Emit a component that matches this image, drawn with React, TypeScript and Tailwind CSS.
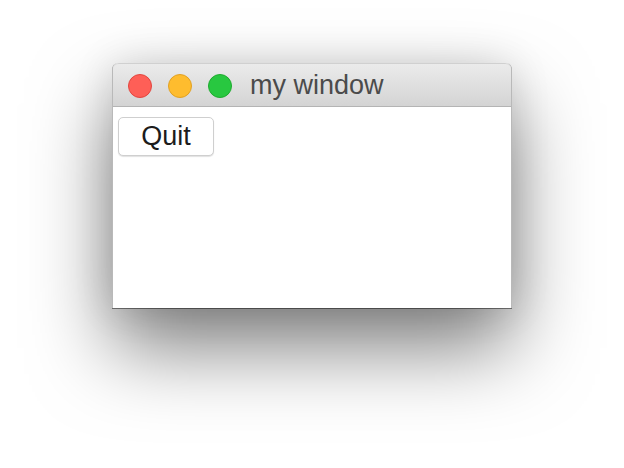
export default function App() {
  return (
    <div className="w-[624px] h-[468px] bg-white pt-[63px] pl-[112px] overflow-hidden" style={{ fontFamily: '"Liberation Sans", Arial, sans-serif' }}>
      {/* window */}
      <div className="w-[400px] h-[245px] flex flex-col rounded-t-[6px] bg-white border-x border-[#b9b9b9] shadow-[0_40px_80px_rgba(0,0,0,0.5),0_0_40px_rgba(0,0,0,0.12),0_1px_0_rgba(0,0,0,0.45)]">
        {/* title bar */}
        <div className="h-[44px] shrink-0 flex items-center pl-[15px] pt-[2px] gap-[16px] rounded-t-[6px] border-t border-[#d0d0d0] border-b border-b-[#b4b4b4] bg-gradient-to-b from-[#ebebeb] to-[#d4d4d4]">
          <span className="w-[24px] h-[24px] rounded-full bg-[#fe5f57] border border-[#e2463f]" />
          <span className="w-[24px] h-[24px] rounded-full bg-[#febc2e] border border-[#e1a123]" />
          <span className="w-[24px] h-[24px] rounded-full bg-[#28c840] border border-[#1fab2f]" />
          <span className="ml-[2px] text-[27px] leading-none text-[#4b4b4b] -mt-[2px]">my window</span>
        </div>
        {/* content */}
        <div className="flex-1 pt-[10px] pl-[5px]">
          <button className="w-[96px] h-[39px] rounded-[5px] bg-white border border-[#cfcfcf] shadow-[0_1px_1px_rgba(0,0,0,0.12)] text-[27px] leading-none text-[#1c1c1c] flex items-center justify-center pb-[1px]">
            Quit
          </button>
        </div>
      </div>
    </div>
  )
}
